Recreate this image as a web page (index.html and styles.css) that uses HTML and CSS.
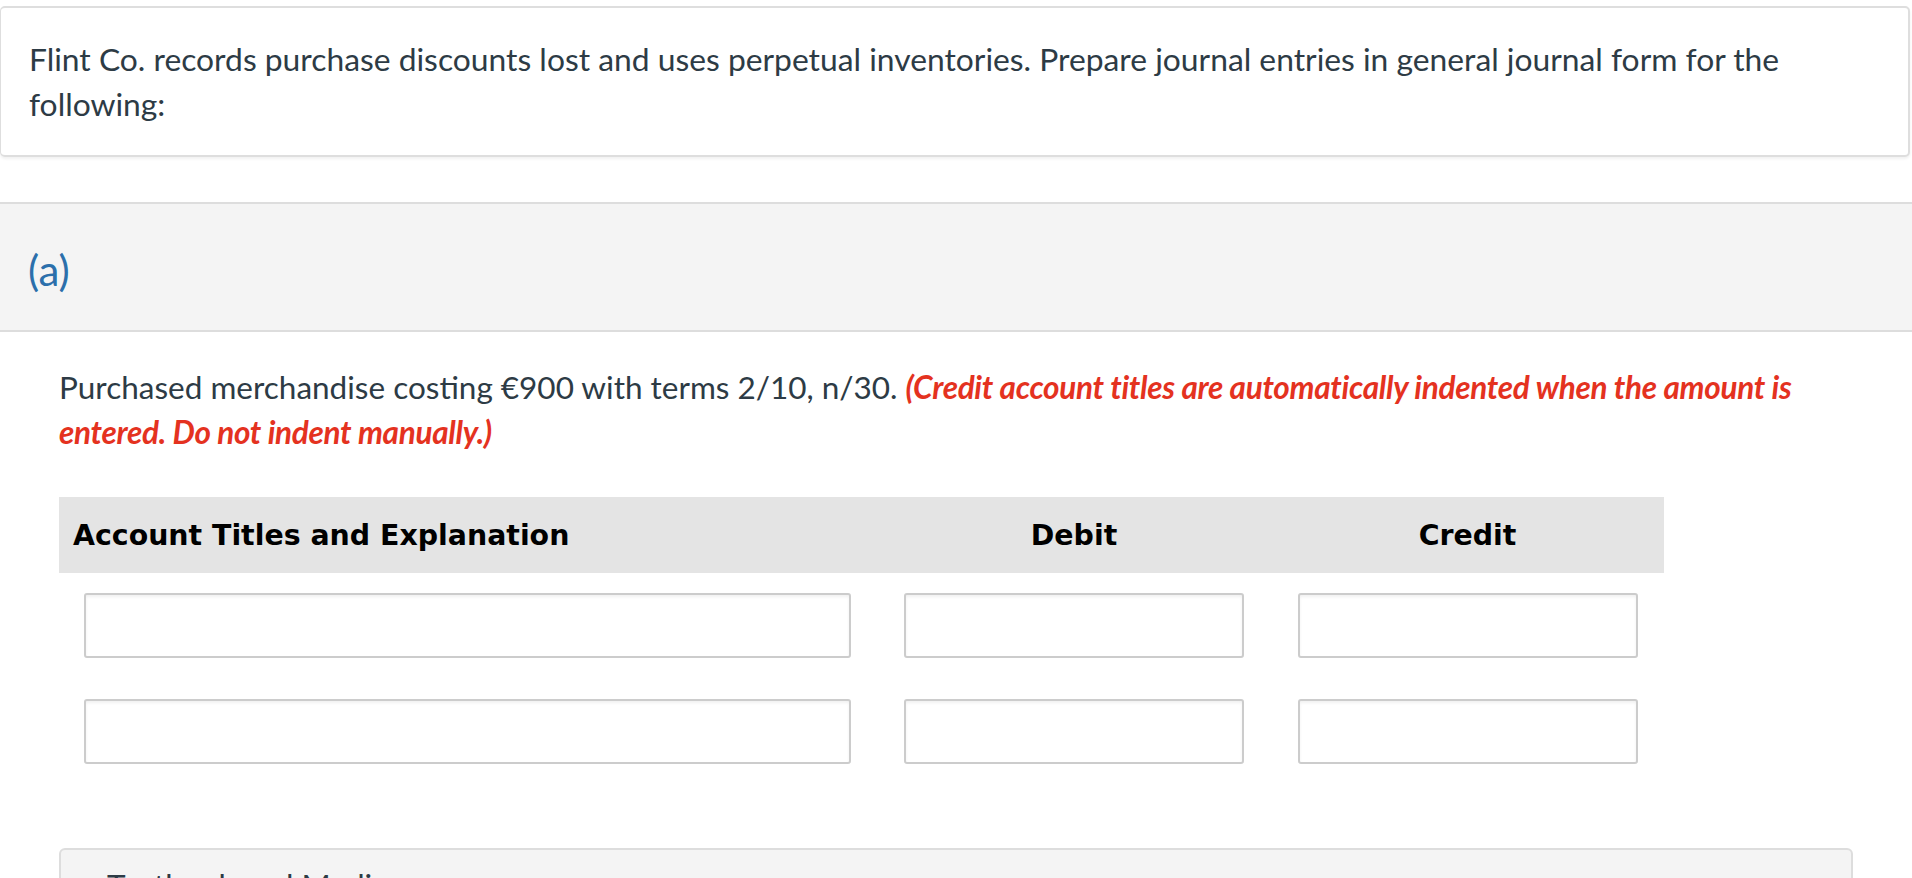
FILE: index.html
```html
<!DOCTYPE html>
<html lang="en">
<head>
<meta charset="utf-8">
<title>Journal entries</title>
<link rel="stylesheet" href="styles.css">
</head>
<body>
  <div class="intro-card">
    <p class="intro-text">Flint Co. records purchase discounts lost and uses perpetual inventories. Prepare journal entries in general journal form for the following:</p>
  </div>

  <div class="part-band">
    <span class="part-label">(a)</span>
  </div>

  <div class="part-body">
    <p class="question">Purchased merchandise costing €900 with terms 2/10, n/30. <em class="note">(Credit account titles are automatically indented when the amount is entered. Do not indent manually.)</em></p>

    <div class="journal">
      <div class="journal-head">
        <div class="head-cell head-account">Account Titles and Explanation</div>
        <div class="head-cell head-center">Debit</div>
        <div class="head-cell head-center">Credit</div>
      </div>
      <div class="journal-row">
        <div class="cell cell-account"><input class="field" type="text"></div>
        <div class="cell cell-amount"><input class="field" type="text"></div>
        <div class="cell cell-amount"><input class="field" type="text"></div>
      </div>
      <div class="journal-row">
        <div class="cell cell-account"><input class="field" type="text"></div>
        <div class="cell cell-amount"><input class="field" type="text"></div>
        <div class="cell cell-amount"><input class="field" type="text"></div>
      </div>
    </div>

    <div class="media-card">
      <div class="media-title">Textbook and Media</div>
    </div>
  </div>
</body>
</html>
```

FILE: styles.css
```css
html, body {
  margin: 0;
  padding: 0;
  background: #ffffff;
  overflow: hidden;
}

body {
  font-family: "Lato", "Open Sans", sans-serif;
  color: #2d3b45;
  font-size: 31.5px;
  line-height: 45px;
}

p {
  margin: 0;
}

.intro-card {
  margin: 6px 2px 0 0;
  border: 2px solid #dedede;
  border-left-width: 1px;
  border-radius: 5px;
  box-shadow: 0 2px 3px rgba(0, 0, 0, 0.06);
  padding: 29px 29px 28px 28px;
  background: #ffffff;
}

.intro-text {
  font-size: 31.8px;
}

.part-band {
  margin-top: 45px;
  height: 126px;
  background: #f4f4f4;
  border-top: 2px solid #dddddd;
  border-bottom: 2px solid #dddddd;
  display: flex;
  align-items: center;
  padding-left: 28px;
}

.part-label {
  color: #2b6fab;
  font-size: 42px;
  line-height: 50px;
  padding-top: 6px;
}

.part-body {
  padding: 33px 59px 0 59px;
}

.note {
  color: #e4321f;
  font-weight: 700;
  font-style: italic;
  letter-spacing: -0.3px;
}

.journal {
  margin-top: 42px;
  width: 1605px;
}

.journal-head {
  display: grid;
  grid-template-columns: 818px 394px 393px;
  background: #e4e4e4;
  height: 76px;
  align-items: center;
}

.head-cell {
  font-family: "DejaVu Sans", "Liberation Sans", sans-serif;
  font-weight: 700;
  font-size: 28.4px;
  line-height: 36px;
  color: #000000;
  padding-top: 2px;
}

.head-account {
  padding-left: 14px;
}

.head-center {
  text-align: center;
}

.journal-row {
  display: grid;
  grid-template-columns: 818px 394px 393px;
  padding: 20px 0 21px;
}

.cell {
  display: flex;
}

.cell-account {
  padding-left: 25px;
}

.cell-amount {
  justify-content: center;
}

.field {
  box-sizing: border-box;
  height: 65px;
  border: 2px solid #cccccc;
  border-radius: 3px;
  box-shadow: inset 0 2px 3px rgba(0, 0, 0, 0.06);
  background: #ffffff;
  margin: 0;
  font: inherit;
}

.cell-account .field {
  width: 767px;
}

.cell-amount .field {
  width: 340px;
}

.media-card {
  margin-top: 63px;
  width: 1794px;
  box-sizing: border-box;
  background: #f4f4f4;
  border: 2px solid #dddddd;
  border-radius: 6px;
  padding: 13px 46px;
  height: 120px;
}

.media-title {
  color: #2d3b45;
}
```
